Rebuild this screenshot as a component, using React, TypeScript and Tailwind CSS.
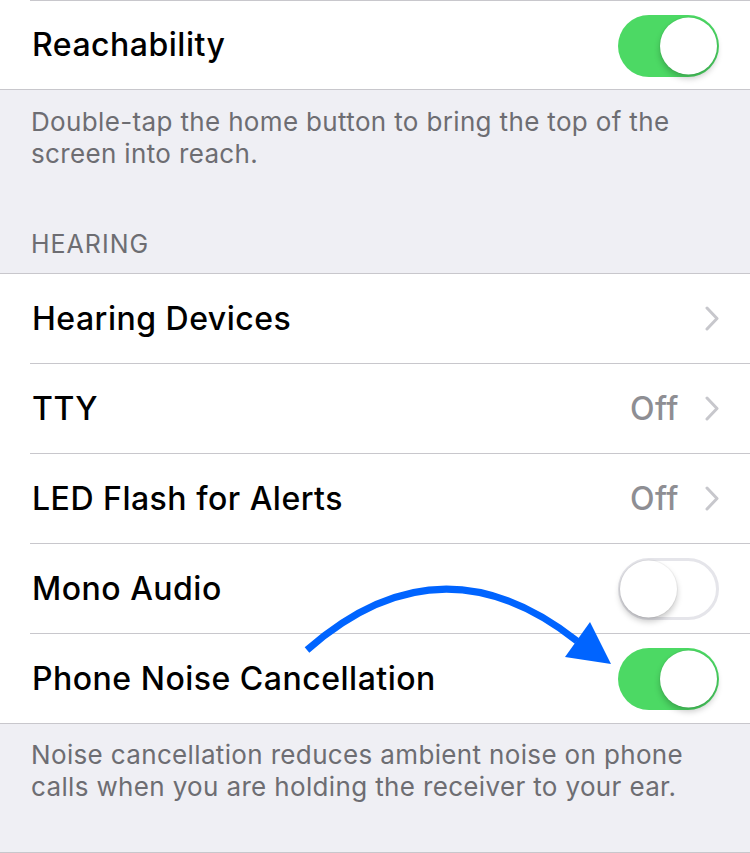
const font = { fontFamily: "Inter, Roboto, 'Noto Sans', sans-serif" };

const Toggle = ({ on }: { on: boolean }) => (
  <div
    className={`relative h-[62px] w-[101px] rounded-full ${
      on ? "bg-[#4cd964]" : "bg-white border-[3px] border-[#e5e5ea]"
    }`}
  >
    <div
      className={`absolute top-1/2 -translate-y-1/2 h-[57px] w-[57px] rounded-full bg-white shadow-[0_4px_6px_rgba(0,0,0,0.22),0_0_0_1px_rgba(0,0,0,0.04)] ${
        on ? "right-[2px]" : "left-[-1px]"
      }`}
    />
  </div>
);

const Chevron = () => (
  <svg width="14" height="25" viewBox="0 0 14 25" className="ml-[26px]">
    <polyline points="2,2 12,12.5 2,23" fill="none" stroke="#c7c7cc" strokeWidth="3" strokeLinecap="round" strokeLinejoin="round" />
  </svg>
);

type RowProps = {
  label: string;
  detail?: string;
  chevron?: boolean;
  toggle?: boolean;
};

const Row = ({ label, detail, chevron, toggle }: RowProps) => (
  <div className="flex h-[89px] items-center justify-between bg-white pl-[32px] pr-[31px]">
    <span className="text-[32px] font-medium text-black tracking-[0.5px]">{label}</span>
    <div className="flex items-center">
      {detail && <span className="text-[32px] font-medium text-[#8e8e93] tracking-[0.5px]">{detail}</span>}
      {chevron && <Chevron />}
      {toggle !== undefined && <Toggle on={toggle} />}
    </div>
  </div>
);

const Inset = () => (
  <div className="bg-white pl-[30px]">
    <div className="h-px bg-[#c8c7cc]" />
  </div>
);

const Line = () => <div className="h-px bg-[#c8c7cc]" />;

export default function App() {
  return (
    <div className="relative h-[853px] w-[750px] overflow-hidden bg-[#efeff4]" style={font}>
      <Inset />
      <div className="flex h-[88px] items-center justify-between bg-white pl-[32px] pr-[31px]">
        <span className="text-[32px] font-medium text-black tracking-[0.5px]">Reachability</span>
        <div className="mt-[2px]">
          <Toggle on />
        </div>
      </div>
      <Line />

      <div className="h-[183px] pl-[31px] pr-[20px] pt-[16px] text-[#6d6d72]">
        <p className="text-[26px] leading-[32px] tracking-[0.35px]">
          Double-tap the home button to bring the top of the screen into reach.
        </p>
        <p className="mt-[58px] text-[25px] leading-[32px] tracking-[1px]">HEARING</p>
      </div>
      <Line />

      <Row label="Hearing Devices" chevron />
      <Inset />
      <Row label="TTY" detail="Off" chevron />
      <Inset />
      <Row label="LED Flash for Alerts" detail="Off" chevron />
      <Inset />
      <Row label="Mono Audio" toggle={false} />
      <Inset />
      <Row label="Phone Noise Cancellation" toggle />
      <Line />

      <div className="h-[128px] pl-[31px] pr-[20px] pt-[15px] text-[#6d6d72]">
        <p className="text-[26px] leading-[32px] tracking-[0.35px]">
          Noise cancellation reduces ambient noise on phone calls when you are holding the receiver to your ear.
        </p>
      </div>
      <Line />
      <div className="h-px bg-white" />

      {/* blue callout arrow pointing at the toggle */}
      <svg className="pointer-events-none absolute left-0 top-0" width="750" height="853">
        <path d="M307 650 Q 440 533 577 641" fill="none" stroke="#0064ff" strokeWidth="7" />
        <polygon points="590,622 565,657 611,664" fill="#0064ff" />
      </svg>
    </div>
  );
}
